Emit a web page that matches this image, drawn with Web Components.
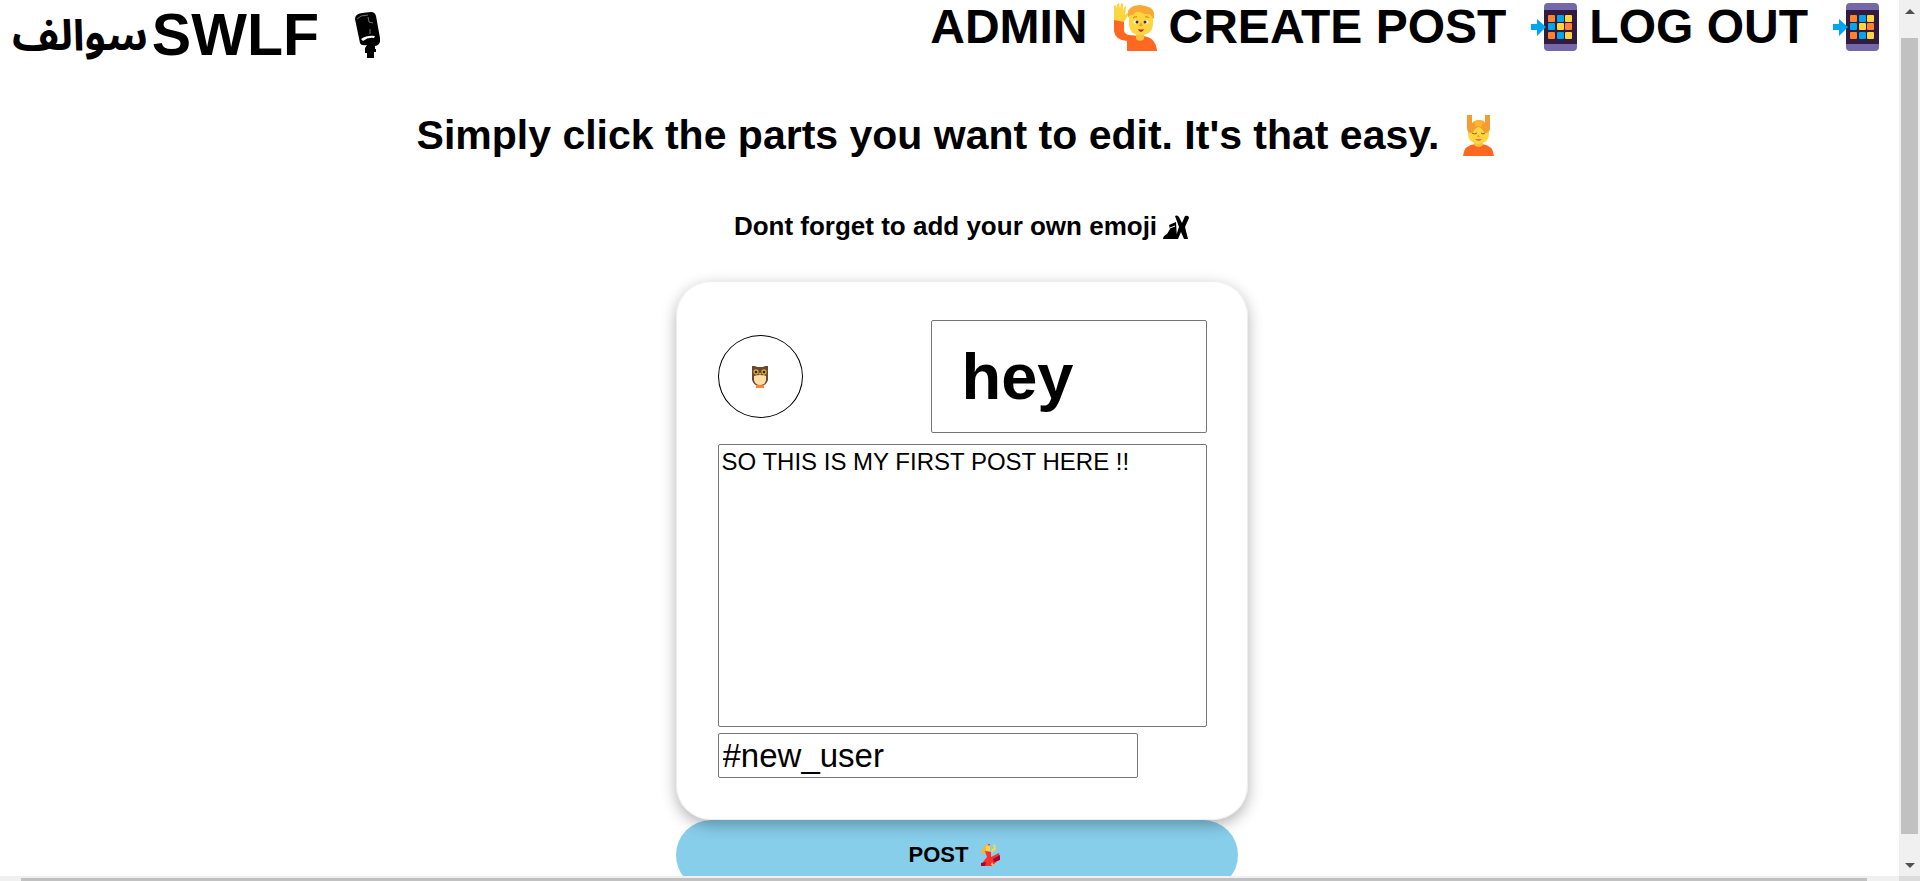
<!DOCTYPE html>
<html lang="en">
<head>
<meta charset="utf-8">
<title>SWLF</title>
<style>
html,body{margin:0;height:100%;background:#fff;color:#000;font-family:"Liberation Sans",Arial,sans-serif}
</style>
</head>
<body>
<swlf-app></swlf-app>
<script>
const ICONS = {
  mic: ['0 0 26 46', `<path d="M1 7Q1 2 8 1L17 0q4 0 5 4l4 22q1 7-5 8v3h1v3h-2v6h-7v-5h-2v-5l2-3Q7 34 6 31z" fill="#000"/><path d="M3 7l4-3 7-1M14 5l1 5 4 1M16 17v5" stroke="#bbb" stroke-width=".6" fill="none"/><path d="M7 27q6-4 14-3l-1 2q-6-1-11 3z" fill="#fff"/>`],
  hand: ['0 0 44 48', `<path d="M1 17h10v11q1 3 5 4l10 1q16-1 18 14v1H14V38Q2 37 1 28z" fill="#ff6723"/><path d="M23 31h8v5q-4 4-8 0z" fill="#f9c23c"/><path d="M1 17V3l2-1 1 4V1l2-1 1 6 1-6 2 1v6l2-4 1 1-1 8 2-2 2 1-5 8z" fill="#ffd640"/><path d="M16 14Q18 3 28 3t12 8v10q-1 11-12 11T16 22z" fill="#ffd640"/><path d="M15 15V8q3-6 12-6 13 1 14 8v6q-3-2-4-5-4 1-8-1-3-2-6-1-2 3-4 3-3 0-4 3z" fill="#f9a833"/><ellipse cx="23" cy="19" rx="2.5" ry="1.8" fill="#fff"/><ellipse cx="33" cy="19" rx="2.5" ry="1.8" fill="#fff"/><circle cx="24" cy="19" r="1.5" fill="#402a32"/><circle cx="32" cy="19" r="1.5" fill="#402a32"/><path d="M20 15q2-2 4-1M32 14q2-1 4 1" stroke="#d67d00" fill="none"/><path d="M28 19l-2 4h4z" fill="#ff9b20"/><path d="M25 26q3 1 6 0-1 3-3 3t-3-3z" fill="#bb1d50"/>`],
  phone: ['0 0 46 48', `<rect x="13" width="33" height="48" rx="4" fill="#7468a8"/><path d="M13 7h33v34H13z" fill="#321b41"/><path d="M0 21h6v-5l9 8-9 9v-6H0z" fill="#00a6ed"/><rect x="17" y="12" width="7" height="7" rx="1" fill="#ff822d"/><rect x="26" y="12" width="7" height="7" rx="1" fill="#00a6ed"/><rect x="34" y="12" width="7" height="7" rx="1" fill="#ffd640"/><rect x="17" y="20" width="7" height="7" rx="1" fill="#00a6ed"/><rect x="26" y="20" width="7" height="7" rx="1" fill="#ffd640"/><rect x="34" y="20" width="7" height="7" rx="1" fill="#ff822d"/><rect x="17" y="29" width="7" height="7" rx="1" fill="#ff822d"/><rect x="26" y="29" width="7" height="7" rx="1" fill="#00a6ed"/><rect x="34" y="29" width="7" height="7" rx="1" fill="#ffd640"/>`],
  massage: ['0 0 31 41', `<path d="M0 41Q1 30 12 29h7q11 1 12 12z" fill="#ff6723"/><path d="M11 26h9v4q-4 4-9 0z" fill="#f9c23c"/><path d="M5 14Q6 6 15 6t11 9v4q0 9-10 10Q5 28 5 19z" fill="#ffd640"/><path d="M4 0h5v9q2-4 7-4t6 3V0h5v14q-1 4-5 4l-4-5-3-1-3 2-3 4q-5 0-5-5z" fill="#f59b34"/><path d="M11 7q5-4 10 0l-3 5-3-1-2 1z" fill="#f9b62f"/><path d="M9 18q3 2 5 0M18 18q2 2 4 0" stroke="#8b5a22" fill="none"/><path d="M15 19l-1 3h3z" fill="#ff9b20"/><path d="M12 24q4 1 7 0-3 3-7 0z" fill="#bb1d50"/>`],
  ski: ['0 0 26 24', `<path d="M0 24q0-3 4-5l3-5-1-4 7-3 1 17zM12 1q3-2 5 3l2 4 3-7q4-1 4 2l-4 9 3 12h-4l-3-7-3 7h-3l4-12z" fill="#000"/><path d="M7 13l5-2" stroke="#fff"/>`],
  owl: ['0 0 16 22', `<path d="M0 0h3l2 1h6l2-1h3v14q-2 6-8 6T0 14z" fill="#6d4534"/><path d="M2 10q6-2 12 0v4q-1 5-6 5t-6-5z" fill="#ffdea7"/><path d="M4 19h8v3H4z" fill="#ff822d"/><circle cx="4" cy="6" r="2" fill="#321b41" stroke="#d3b02b" stroke-width="1.3"/><circle cx="12" cy="6" r="2" fill="#321b41" stroke="#d3b02b" stroke-width="1.3"/><path d="M7 7h2l-1 3z" fill="#f9c23c"/>`],
  dance: ['0 0 20 22', `<path d="M1 8q3-7 7-8 3 1 2 5L7 8l-4 2z" fill="#f9b62f"/><path d="M6 2h4v5H6zM11 6l3-2-1-3 2-1 1 5-4 4z" fill="#ffd640"/><path d="M5 7l6 1v5l8-4 1 6-5 4-3 3-11 0 2-4 4-5z" fill="#f8312f"/><path d="M13 15l7-4v5l-6 2zM1 19l5-1-1 4H1z" fill="#990838"/><path d="M12 18l2 4-3-1z" fill="#ffd640"/><path d="M8 0h2l-1 2z" fill="#f70a8d"/>`]
};
customElements.define('emoji-icon', class extends HTMLElement {
  connectedCallback() {
    if (this.shadowRoot) return;
    const [box, art] = ICONS[this.getAttribute('name')];
    const [, , w, h] = box.split(' ');
    this.attachShadow({mode: 'open'}).innerHTML = `<style>:host{display:block;flex:none}svg{display:block}</style><svg width="${w}" height="${h}" viewBox="${box}" aria-hidden="true">${art}</svg>`;
  }
});
function define(name, html) {
  const t = document.createElement('template');
  t.innerHTML = html;
  customElements.define(name, class extends HTMLElement {
    constructor() {
      super();
      this.attachShadow({mode: 'open'}).append(t.content.cloneNode(true));
    }
  });
}
define('nav-link', `<style>
:host{display:block}
a{display:flex;align-items:center;gap:25px;color:inherit;text-decoration:none;font-size:48px;line-height:54px;font-weight:700;white-space:nowrap}
</style><a href="#"><slot></slot></a>`);
define('site-header', `<style>
:host{display:block}
header{display:flex;justify-content:space-between;align-items:flex-start;padding:0 20px 0 12px}
.logo{display:flex;align-items:center;gap:35px;color:inherit;text-decoration:none;font-size:59px;line-height:70px;font-weight:700;white-space:nowrap}
.name{display:flex;gap:4px}
.ar{font-family:"Liberation Sans","Noto Sans Arabic","DejaVu Sans",sans-serif;font-size:43px}
nav{display:flex;gap:12px}
</style><header>
<a class="logo" href="#"><span class="name"><span class="ar" lang="ar">سوالف</span><span>SWLF</span></span><emoji-icon name="mic"></emoji-icon></a>
<nav><nav-link>ADMIN<emoji-icon name="hand"></emoji-icon></nav-link><nav-link>CREATE POST<emoji-icon name="phone"></emoji-icon></nav-link><nav-link>LOG OUT<emoji-icon name="phone"></emoji-icon></nav-link></nav>
</header>`);
define('page-intro', `<style>
:host{display:block}
h1,h2{display:flex;justify-content:center;align-items:center;margin:0;white-space:nowrap}
h1{gap:24px;padding:35px 12px 0 0;font-size:41px;line-height:60px}
h2{gap:6px;padding:41px 0 34px;font-size:26px;line-height:41px}
</style><h1>Simply click the parts you want to edit. It's that easy.<emoji-icon name="massage"></emoji-icon></h1>
<h2>Dont forget to add your own emoji<emoji-icon name="ski"></emoji-icon></h2>`);
define('post-editor', `<style>
:host{display:block;width:572px;margin:0 auto}
*{box-sizing:border-box}
.card{position:relative;padding:38px 40px 41px 41px;border:1px solid #eee;border-radius:35px;box-shadow:0 5px 15px rgba(0,0,0,.3)}
.top{display:flex;justify-content:space-between;align-items:center;margin-bottom:11px}
.avatar{display:flex;align-items:center;justify-content:center;width:85px;height:83px;padding:0;border:1px solid #000;border-radius:50%;background:#fff}
input,textarea{display:block;margin:0;border:1px solid #767676;border-radius:2px;background:#fff;color:#000;font-family:inherit;outline:0}
.title{width:276px;height:113px;padding:0 30px;font-size:65px;font-weight:700}
textarea{width:100%;height:283px;padding:3px;font-size:24px;line-height:28px;resize:none}
.tag{width:420px;height:45px;margin-top:6px;padding:0 4px;font-size:33px}
.post{display:flex;align-items:center;justify-content:center;gap:12px;width:562px;height:70px;padding:0 4px 0 0;border:0;border-radius:35px;background:#87ceeb;color:#000;font:700 22px "Liberation Sans",Arial,sans-serif}
</style><form><div class="card">
<div class="top"><button class="avatar" type="button" aria-label="Choose emoji"><emoji-icon name="owl"></emoji-icon></button>
<input class="title" aria-label="Title" value="hey"></div>
<textarea aria-label="Post">SO THIS IS MY FIRST POST HERE !!</textarea>
<input class="tag" aria-label="Tag" value="#new_user">
</div><button class="post" type="button">POST<emoji-icon name="dance"></emoji-icon></button></form>`);
define('scroll-rail', `<style>
:host{display:flex;flex-direction:column;align-items:center;background:#f0f0f0;padding:9px 0 8px}
.thumb{flex:1;width:17px;background:#c1c1c1;margin:24px 0 29px}
:host([across]){flex-direction:row;align-items:stretch;padding:2px 32px 0 21px}
:host([across]) .thumb{width:auto;margin:0}
:host([across]) svg{display:none}
svg{display:block;flex:none}
</style><svg width="10" height="5" viewBox="0 0 10 5"><path d="M0 5L5 0l5 5z" fill="#505050"/></svg><div class="thumb"></div><svg width="10" height="5" viewBox="0 0 10 5"><path d="M0 0l5 5 5-5z" fill="#505050"/></svg>`);
define('swlf-app', `<style>
:host{display:grid;grid-template:minmax(0,1fr) 5px / minmax(0,1fr) 21px;height:100vh;overflow:hidden}
main{overflow:hidden}
.page{padding-left:24px}
.corner{background:#dcdcdc}
</style><main><site-header></site-header><div class="page"><page-intro></page-intro><post-editor></post-editor></div></main>
<scroll-rail></scroll-rail><scroll-rail across></scroll-rail><div class="corner"></div>`);
</script>
</body>
</html>
